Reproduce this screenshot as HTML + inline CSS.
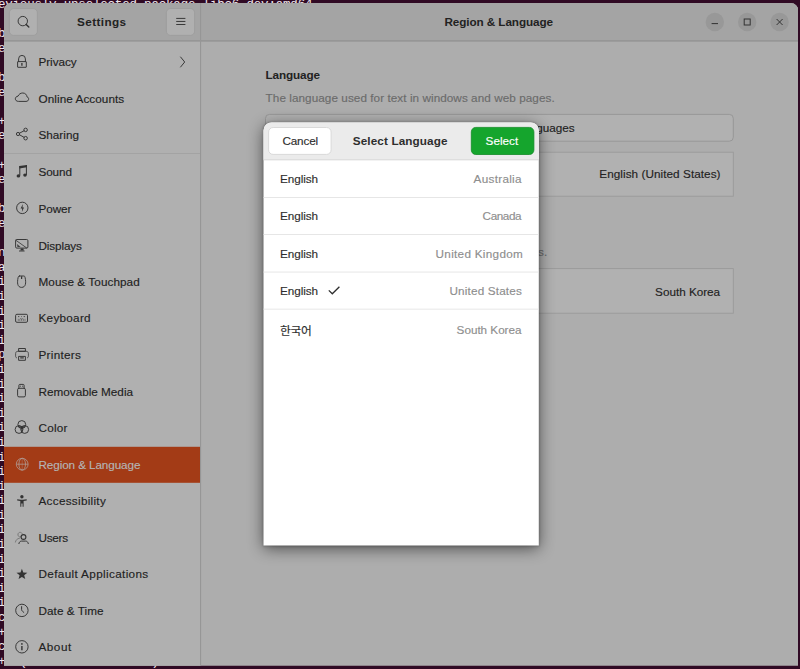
<!DOCTYPE html>
<html lang="en">
<head>
<meta charset="utf-8">
<title>Settings – Region &amp; Language – Select Language</title>
<style>
html,body{margin:0;padding:0}
body{width:800px;height:669px;overflow:hidden;position:relative;background:#300a24;
 font-family:"Liberation Sans","Noto Sans CJK KR",sans-serif;font-size:11.73px;color:#222222}
.term{position:absolute;left:-89.82px;letter-spacing:-0.191px;top:-1.91px;margin:0;
 font-family:"Liberation Mono","DejaVu Sans Mono",monospace;font-size:12.500px;line-height:14.6px;color:#eee6ec;white-space:pre}
.gfx{position:absolute;left:0;top:0}
.gfx circle,.gfx ellipse,.gfx rect{stroke-linecap:butt}
.t{position:absolute;white-space:nowrap;line-height:16px;height:16px}
span.t{-webkit-text-stroke:0.15px currentColor}
b.t{font-weight:bold}
header,nav,main,section{display:block}
</style>
</head>
<body>
<pre class="term">Selecting previously unselected package libc6-dev:amd64.
Preparing to unpack .../06-libc6-dev_2.35-0ubuntu3.8_amd64.deb ...
Unpacking libc6-dev:amd64 (2.35-0ubuntu3.8) ...
Selecting previously unselected package libstdc++-11-dev:amd64.
Preparing to unpack .../07-libstdc++-11-dev_11.4.0-1ubuntu1~22.04_amd64.deb ...
Unpacking libstdc++-11-dev:amd64 (11.4.0-1ubuntu1~22.04) ...
Selecting previously unselected package g++-11.
Preparing to unpack .../08-g++-11_11.4.0-1ubuntu1~22.04_amd64.deb ...
Unpacking g++-11 (11.4.0-1ubuntu1~22.04) ...
Selecting previously unselected package g++.
Preparing to unpack .../09-g++_4%3a11.2.0-1ubuntu1_amd64.deb ...
Unpacking g++ (4:11.2.0-1ubuntu1) ...
Selecting previously unselected package libcrypt-dev:amd64.
Preparing to unpack .../10-libcrypt-dev_1%3a4.4.27-1_amd64.deb ...
Unpacking libcrypt-dev:amd64 (1:4.4.27-1) ...
Selecting previously unselected package manpages-dev.
Preparing to unpack .../11-manpages-dev_5.10-1ubuntu1_all.deb ...
Unpacking manpages-dev (5.10-1ubuntu1) ...
Setting up manpages-dev (5.10-1ubuntu1) ...
Setting up libasan6:amd64 (11.4.0-1ubuntu1~22.04) ...
Setting up libtirpc-dev:amd64 (1.3.2-2ubuntu0.1) ...
Setting up libatomic1:amd64 (12.3.0-1ubuntu1~22.04) ...
Setting up libubsan1:amd64 (12.3.0-1ubuntu1~22.04) ...
Setting up libnsl-dev:amd64 (1.3.0-2build2) ...
Setting up cpp-11 (11.4.0-1ubuntu1~22.04) ...
Setting up libcrypt-dev:amd64 (1:4.4.27-1) ...
Setting up libisl23:amd64 (0.24-2build1) ...
Setting up libc-dev-bin (2.35-0ubuntu3.8) ...
Setting up libcc1-0:amd64 (12.3.0-1ubuntu1~22.04) ...
Setting up liblsan0:amd64 (12.3.0-1ubuntu1~22.04) ...
Setting up libitm1:amd64 (12.3.0-1ubuntu1~22.04) ...
Setting up libtsan0:amd64 (11.4.0-1ubuntu1~22.04) ...
Setting up libmpc3:amd64 (1.2.1-2build1) ...
Setting up libquadmath0:amd64 (12.3.0-1ubuntu1~22.04) ...
Setting up libgomp1:amd64 (12.3.0-1ubuntu1~22.04) ...
Setting up libgcc-11-dev:amd64 (11.4.0-1ubuntu1~22.04) ...
Setting up libc6-dev:amd64 (2.35-0ubuntu3.8) ...
Setting up libbinutils:amd64 (2.38-4ubuntu2.6) ...
Setting up libctf-nobfd0:amd64 (2.38-4ubuntu2.6) ...
Setting up libctf0:amd64 (2.38-4ubuntu2.6) ...
Setting up libstdc++-11-dev:amd64 (11.4.0-1ubuntu1~22.04) ...
Setting up libdpkg-perl (1.21.1ubuntu2.3) ...
Setting up gcc-11 (11.4.0-1ubuntu1~22.04) ...
Setting up g++-11 (11.4.0-1ubuntu1~22.04) ...
Setting up gcc (4:11.2.0-1ubuntu1) ...
Setting up g++ (4:11.2.0-1ubuntu1) ...</pre>
<div class="window">
<svg class="gfx" width="800" height="669" viewBox="0 0 800 669" aria-hidden="true">
<defs><clipPath id="wclip"><path d="M4 665.8V10.6A7.5 7.5 0 0 1 11.5 3.1H790.8A7.5 7.5 0 0 1 798.3 10.6V665.8Z"/></clipPath></defs>
<g clip-path="url(#wclip)">
<rect x="4" y="3" width="794" height="663" fill="#adadad"/>
<rect x="4" y="3" width="196" height="663" fill="#b0b0b0"/>
<rect x="4" y="3" width="794" height="37.5" fill="#a4a4a4"/>
<rect x="4" y="40.2" width="794" height="1.4" fill="#929292"/>
<rect x="200" y="3" width="1.1" height="663" fill="#969696"/>
<rect x="4" y="153" width="196" height="0.8" fill="#a0a0a0"/>
<rect x="4" y="446.8" width="196" height="36.0" fill="#a33b16"/>
</g>
<rect x="9.4" y="8.6" width="28.0" height="26.8" rx="4.2" fill="#b0b0b0" stroke="#9b9b9b" stroke-width="0.8"/>
<rect x="166.4" y="8.5" width="28.2" height="26.9" rx="4.2" fill="#b0b0b0" stroke="#9b9b9b" stroke-width="0.8"/>
<rect x="265.5" y="114.4" width="467.8" height="26.8" rx="4" fill="#b1b1b1" stroke="#979797" stroke-width="1"/>
<rect x="265.5" y="152.2" width="467.8" height="44.0" fill="#b1b1b1" stroke="#9a9a9a" stroke-width="0.9"/>
<rect x="265.5" y="268.6" width="467.8" height="44.6" fill="#b1b1b1" stroke="#9a9a9a" stroke-width="0.9"/>
<g fill="none" stroke="#333333" stroke-width="0.95" stroke-linecap="round" stroke-linejoin="round" stroke-width="1.1"><circle cx="22.8" cy="21.1" r="4.7"/><path d="M26.2 24.4 L28.8 26.9" stroke-width="1.4"/></g>
<g fill="none" stroke="#333333" stroke-width="0.95" stroke-linecap="round" stroke-linejoin="round" stroke-width="1.0" stroke-linecap="butt"><path d="M176.6 18.4H185M176.6 21.45H185M176.6 24.5H185"/></g>
<path fill="none" stroke="#333333" stroke-width="0.95" stroke-linecap="round" stroke-linejoin="round" stroke-width="0.9" d="M180.6 57 L184.7 62 L180.6 67"/>
<g fill="none" stroke="#333333" stroke-width="0.95" stroke-linecap="round" stroke-linejoin="round"><rect x="17.6" y="61.6" width="8.7" height="5.7" rx="0.3"/><path d="M18.6 61.4V58.9A3.4 3.5 0 0 1 25.4 58.9V61.4"/><path d="M21.9 63.1V65.7" stroke-width="1.3" stroke-linecap="butt"/></g>
<path fill="none" stroke="#333333" stroke-width="0.95" stroke-linecap="round" stroke-linejoin="round" d="M18.2 101.4C14.3 101.4 14.4 96.5 18.0 96.2C18.9 94.1 20.6 93.0 22.8 93.0C25.3 93.0 26.8 94.8 27.0 96.9C29.5 97.5 29.1 101.4 26.4 101.4Z"/>
<g fill="none" stroke="#333333" stroke-width="0.95" stroke-linecap="round" stroke-linejoin="round"><circle cx="18" cy="134" r="1.6"/><circle cx="25.6" cy="129.9" r="1.75"/><circle cx="25.6" cy="138.2" r="1.75"/><path d="M19.5 133.2L24 130.8M19.5 134.8L24 137.3"/></g>
<g fill="#333333" stroke="none"><path d="M19.3 166.0L26.9 164.9V167.2L19.3 168.4Z"/><rect x="19.3" y="166" width="1" height="9.6"/><rect x="25.9" y="165" width="1" height="9.9"/><ellipse cx="18.4" cy="175.9" rx="1.8" ry="1.6"/><ellipse cx="25.0" cy="175.1" rx="1.8" ry="1.6"/></g>
<g fill="none" stroke="#333333" stroke-width="0.95" stroke-linecap="round" stroke-linejoin="round"><circle cx="22.3" cy="207.9" r="5.7"/></g><path fill="#333333" d="M22.9 203.9L20.6 208.4H22.2L21.9 211.9L24.0 207.4H22.5Z"/>
<g fill="none" stroke="#333333" stroke-width="0.95" stroke-linecap="round" stroke-linejoin="round"><rect x="15.6" y="239.5" width="12.3" height="8.6" rx="1.2"/><path d="M15.9 240.3L26.6 247.9" stroke-width="0.8"/><path d="M19.0 251.0H24.6" stroke-width="0.9" stroke-linecap="butt"/></g><path fill="#333333" d="M20.9 248.4H23.3L23.9 250.6H20.3Z"/><path fill="#333333" d="M17.1 243.9L17.4 246.9H20.6Z" opacity="0.9"/>
<g fill="none" stroke="#333333" stroke-width="0.95" stroke-linecap="round" stroke-linejoin="round"><path d="M19.4 276.0H23.8C24.6 276.0 24.9 276.6 25.1 277.6C26.2 282.6 25.9 287.4 21.6 287.4C17.3 287.4 17.0 282.6 18.1 277.6C18.3 276.6 18.6 276.0 19.4 276.0Z"/><path d="M21.6 276.2V278.9" stroke-width="1.2" stroke-linecap="butt"/></g>
<g fill="none" stroke="#333333" stroke-width="0.95" stroke-linecap="round" stroke-linejoin="round"><rect x="15.6" y="314.3" width="11.9" height="8.0" rx="1.3"/><path d="M18 316.6H19.3M21.2 316.6H21.9M23.6 316.6H25.1" stroke-width="0.8" stroke-linecap="butt"/><path d="M18.3 320.6V319.2M19.8 320.6V319.2C19.8 318.3 21.6 318.3 21.6 319.2V320.6M21.6 319.2C21.6 318.3 23.4 318.3 23.4 319.2V320.6M25 320.6V319.2" stroke-width="0.6" opacity="0.75"/></g>
<g fill="none" stroke="#333333" stroke-width="0.95" stroke-linecap="round" stroke-linejoin="round"><rect x="18.6" y="348.5" width="6.8" height="2.8"/><path opacity="0.8" d="M16.6 357.9C15.8 357.5 15.6 356.8 15.6 355.9V353.6C15.6 352.1 16.5 351.3 17.9 351.3H26.1C27.5 351.3 28.4 352.1 28.4 353.6V355.9C28.4 356.8 28.2 357.5 27.4 357.9"/><rect x="18.6" y="356.4" width="6.8" height="3.9"/><path d="M20.2 357.9H23.8" stroke-width="1.2" stroke-linecap="butt"/></g>
<g fill="none" stroke="#333333" stroke-width="0.95" stroke-linecap="round" stroke-linejoin="round"><rect x="17.6" y="388.3" width="7.8" height="8.6" rx="1.4"/><path d="M18.9 388.1V385.3C18.9 384.7 19.3 384.4 19.8 384.4H23.2C23.7 384.4 24.1 384.7 24.1 385.3V388.1"/><path d="M19.9 386.2H20.9M22.1 386.2H23.1" stroke-width="0.9" stroke-linecap="butt"/></g>
<clipPath id="cA"><circle cx="21.8" cy="424.5" r="3.9"/></clipPath><clipPath id="cB"><circle cx="19.0" cy="429.5" r="3.9"/></clipPath>
<g fill="#333333" stroke="none"><circle cx="19.0" cy="429.5" r="3.9" clip-path="url(#cA)" opacity="0.7"/><circle cx="24.7" cy="429.5" r="3.9" clip-path="url(#cA)" opacity="0.7"/><circle cx="24.7" cy="429.5" r="3.9" clip-path="url(#cB)" opacity="0.6"/><g clip-path="url(#cA)"><circle cx="24.7" cy="429.5" r="3.9" clip-path="url(#cB)" opacity="0.8"/></g></g>
<g fill="none" stroke="#333333" stroke-width="0.95" stroke-linecap="round" stroke-linejoin="round" stroke-width="0.85"><circle cx="21.8" cy="424.5" r="3.9"/><circle cx="19.0" cy="429.5" r="3.9"/><circle cx="24.7" cy="429.5" r="3.9"/></g>
<g fill="none" stroke="#b4b4b4" stroke-width="0.8" opacity="0.8"><circle cx="22.2" cy="464.2" r="5.9"/><ellipse cx="22.2" cy="464.2" rx="3.3" ry="5.9"/><path d="M16.3 464.2H28.1" stroke-width="0.8"/><path d="M22.2 458.3V470.1" stroke-width="0.6" opacity="0.6"/></g>
<g fill="#333333" stroke="none"><circle cx="21.9" cy="496.8" r="1.7"/><path d="M17.2 499.3L21.0 499.7H22.9L26.7 499.3V500.4L23.6 500.9V506.8H22.6V503.4H21.3V506.8H20.3V500.9L17.2 500.4Z"/></g>
<g fill="none" stroke="#333333" stroke-width="0.95" stroke-linecap="round" stroke-linejoin="round" stroke-width="1.2"><circle cx="23.5" cy="537" r="2.4" stroke-width="1.1"/><path d="M18.9 543.6C19.2 541.9 20.3 541.1 21.6 541.1H25.6C26.9 541.1 28.0 541.9 28.3 543.6"/></g>
<g fill="none" stroke="#333333" stroke-width="0.95" stroke-linecap="round" stroke-linejoin="round" stroke-width="0.9" opacity="0.45"><path d="M20.9 536.9C18.7 537.4 17.6 535.6 18.0 534.0C18.6 531.8 21.6 531.7 22.4 533.9"/><path d="M15.4 542.1C15.7 540.1 17.0 538.7 19.5 538.2"/></g>
<polygon fill="#333333" points="21.90,568.80 23.31,572.56 27.32,572.74 24.18,575.24 25.25,579.11 21.90,576.90 18.55,579.11 19.62,575.24 16.48,572.74 20.49,572.56"/>
<g fill="none" stroke="#333333" stroke-width="0.95" stroke-linecap="round" stroke-linejoin="round"><circle cx="21.9" cy="610.4" r="6.2"/><path d="M21.6 606.6V609.6C21.6 610.4 22.0 610.8 22.4 611.2L23.8 612.4" stroke-width="1.0"/></g>
<g fill="none" stroke="#333333" stroke-width="0.95" stroke-linecap="round" stroke-linejoin="round"><circle cx="21.9" cy="646.8" r="6.2"/><path d="M21.9 645.9V650.2" stroke-width="1.4" stroke-linecap="butt"/></g><circle cx="21.9" cy="643.9" r="0.85" fill="#333333"/>
<g fill="#989898"><circle cx="714.8" cy="22" r="9.2"/><circle cx="747.2" cy="22" r="9.2"/><circle cx="779.6" cy="22" r="9.2"/></g>
<g fill="none" stroke="#333333" stroke-width="1.0"><path d="M711.6 23.6H718"/><rect x="744.2" y="19" width="6" height="6"/><path d="M776.6 19L782.6 25M782.6 19L776.6 25"/></g>
</svg>
<header>
<b class="t" style="left:77.00px;top:14px;letter-spacing:0.398px;">Settings</b>
<b class="t" style="left:444.40px;top:14px;letter-spacing:-0.082px;">Region &amp; Language</b>
</header>
<nav>
<span class="t" style="left:38.50px;top:54px;letter-spacing:-0.060px;">Privacy</span>
<span class="t" style="left:38.50px;top:91px;letter-spacing:0.073px;">Online Accounts</span>
<span class="t" style="left:38.50px;top:127px;letter-spacing:0.004px;">Sharing</span>
<span class="t" style="left:38.50px;top:164px;letter-spacing:-0.117px;">Sound</span>
<span class="t" style="left:38.50px;top:201px;letter-spacing:-0.104px;">Power</span>
<span class="t" style="left:38.50px;top:238px;letter-spacing:-0.132px;">Displays</span>
<span class="t" style="left:38.50px;top:274px;letter-spacing:0.073px;">Mouse &amp; Touchpad</span>
<span class="t" style="left:38.50px;top:310px;letter-spacing:0.279px;">Keyboard</span>
<span class="t" style="left:38.50px;top:347px;letter-spacing:0.284px;">Printers</span>
<span class="t" style="left:38.50px;top:384px;letter-spacing:0.005px;">Removable Media</span>
<span class="t" style="left:38.50px;top:420px;letter-spacing:0.250px;">Color</span>
<span class="t" style="left:38.50px;top:457px;letter-spacing:-0.105px;color:#b4b4b4;">Region &amp; Language</span>
<span class="t" style="left:38.50px;top:493px;letter-spacing:0.287px;">Accessibility</span>
<span class="t" style="left:38.50px;top:530px;letter-spacing:-0.261px;">Users</span>
<span class="t" style="left:38.50px;top:566px;letter-spacing:0.357px;">Default Applications</span>
<span class="t" style="left:38.50px;top:603px;letter-spacing:0.063px;">Date &amp; Time</span>
<span class="t" style="left:38.50px;top:639px;letter-spacing:0.508px;">About</span>
</nav>
<main>
<b class="t" style="left:265.60px;top:67px;letter-spacing:-0.147px;">Language</b>
<span class="t" style="left:265.60px;top:90px;letter-spacing:0.060px;color:#6b6b6b;">The language used for text in windows and web pages.</span>
<span class="t" style="left:424.00px;top:120px;letter-spacing:0.006px;">Manage Installed Languages</span>
<span class="t" style="left:278.50px;top:166px;letter-spacing:-0.200px;">Language</span>
<span class="t" style="left:599.30px;top:166px;letter-spacing:0.062px;">English (United States)</span>
<b class="t" style="left:265.60px;top:221px;letter-spacing:-0.036px;">Formats</b>
<span class="t" style="left:265.60px;top:244px;letter-spacing:0.175px;color:#6b6b6b;">The format used for numbers, dates, and currencies.</span>
<span class="t" style="left:278.50px;top:284px;letter-spacing:-0.019px;">Formats</span>
<span class="t" style="left:655.10px;top:284px;letter-spacing:-0.013px;">South Korea</span>
</main>
</div>
<section class="dialog">
<svg class="gfx" width="800" height="669" viewBox="0 0 800 669" aria-hidden="true">
<defs>
<filter id="sh" x="-20%" y="-10%" width="140%" height="125%"><feGaussianBlur stdDeviation="8"/></filter>
<filter id="sh2" x="-10%" y="-10%" width="120%" height="120%"><feGaussianBlur stdDeviation="1.2"/></filter>
<clipPath id="dclip"><path d="M263.5 545.6V130.4A8 8 0 0 1 271.5 122.4H530.8A8 8 0 0 1 538.8 130.4V545.6Z"/></clipPath>
</defs>
<path d="M263.5 548.6V133.4A8 8 0 0 1 271.5 125.4H530.8A8 8 0 0 1 538.8 133.4V548.6Z" fill="#000" opacity="0.55" filter="url(#sh)"/>
<path d="M263 546.6V130.4A8 8 0 0 1 271.5 122H530.8A8 8 0 0 1 539.3 130.4V546.6Z" fill="#000" opacity="0.2" filter="url(#sh2)"/>
<g clip-path="url(#dclip)">
<rect x="263" y="122" width="276" height="424" fill="#ffffff"/>
<rect x="263" y="122" width="276" height="37.6" fill="#ebebeb"/>
<rect x="263" y="159.3" width="276" height="1" fill="#d4d4d4"/>
<rect x="263" y="197" width="276" height="0.9" fill="#e4e4e4"/>
<rect x="263" y="234" width="276" height="0.9" fill="#e4e4e4"/>
<rect x="263" y="271.6" width="276" height="0.9" fill="#e4e4e4"/>
<rect x="263" y="308.7" width="276" height="0.9" fill="#e4e4e4"/>
</g>
<rect x="268.6" y="127.5" width="62.5" height="26.9" rx="4.5" fill="#ffffff" stroke="#d6d6d6" stroke-width="0.9"/>
<rect x="471.3" y="127.4" width="62.6" height="27.1" rx="4.5" fill="#15a52d" stroke="#128a26" stroke-width="0.8"/>
<path d="M328.8 290.4L332.3 293.8L339.4 286.7" fill="none" stroke="#2e2e2e" stroke-width="1.3"/>
</svg>
<span class="t" style="left:282.40px;top:133px;letter-spacing:-0.135px;color:#2e2e2e;">Cancel</span>
<b class="t" style="left:352.80px;top:133px;letter-spacing:0.114px;color:#2e2e2e;">Select Language</b>
<span class="t" style="left:485.60px;top:133px;letter-spacing:0.017px;color:#ffffff;">Select</span>
<span class="t" style="left:280.00px;top:171px;letter-spacing:-0.070px;color:#2e2e2e;">English</span>
<span class="t" style="left:473.60px;top:171px;letter-spacing:0.291px;color:#8e8e8e;">Australia</span>
<span class="t" style="left:280.00px;top:208px;letter-spacing:-0.070px;color:#2e2e2e;">English</span>
<span class="t" style="left:482.60px;top:208px;letter-spacing:-0.427px;color:#8e8e8e;">Canada</span>
<span class="t" style="left:280.00px;top:246px;letter-spacing:-0.070px;color:#2e2e2e;">English</span>
<span class="t" style="left:435.60px;top:246px;letter-spacing:0.291px;color:#8e8e8e;">United Kingdom</span>
<span class="t" style="left:280.00px;top:283px;letter-spacing:-0.070px;color:#2e2e2e;">English</span>
<span class="t" style="left:449.40px;top:283px;letter-spacing:0.176px;color:#8e8e8e;">United States</span>
<span class="t" style="left:280.00px;top:323px;letter-spacing:-0.281px;color:#2e2e2e;">한국어</span>
<span class="t" style="left:456.60px;top:322px;letter-spacing:-0.023px;color:#8e8e8e;">South Korea</span>
</section>
</body>
</html>
